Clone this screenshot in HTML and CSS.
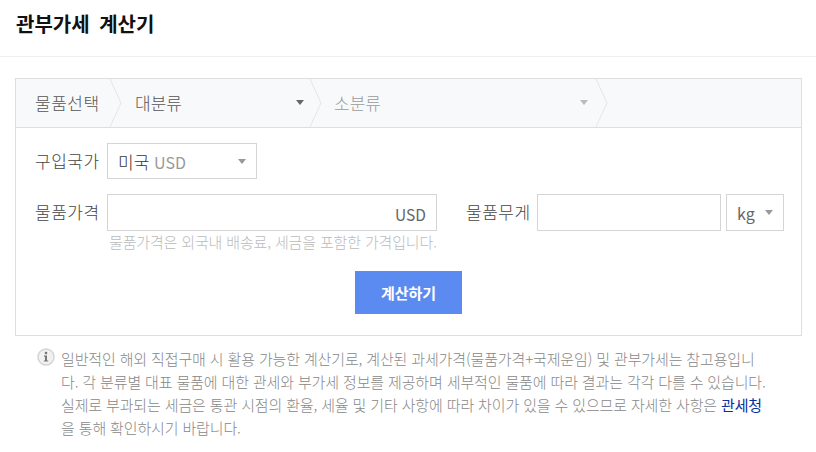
FILE: index.html
```html
<!DOCTYPE html>
<html lang="ko">
<head>
    <meta charset="UTF-8">
    <meta name="viewport" content="width=device-width, initial-scale=1.0">
    <title>관부가세 계산기</title>
    <link rel="stylesheet" href="styles.css">
</head>
<body>
    <header class="page-head">
        <h1>관부가세 계산기</h1>
    </header>
    <main class="content">
        <section class="calc-box">
            <div class="steps">
                <div class="step step-label">
                    물품선택
                    <svg class="chevron" width="13" height="48" viewBox="0 0 13 48"><path d="M1 0 L12 24 L1 48" fill="none" stroke="#e3e5e9"/></svg>
                </div>
                <div class="step step-main">
                    대분류
                    <span class="arrow"></span>
                    <svg class="chevron" width="13" height="48" viewBox="0 0 13 48"><path d="M1 0 L12 24 L1 48" fill="none" stroke="#e3e5e9"/></svg>
                </div>
                <div class="step step-sub">
                    소분류
                    <span class="arrow arrow-light"></span>
                    <svg class="chevron" width="13" height="48" viewBox="0 0 13 48"><path d="M1 0 L12 24 L1 48" fill="none" stroke="#e3e5e9"/></svg>
                </div>
            </div>
            <div class="form-body">
                <div class="row row-country">
                    <span class="label">구입국가</span>
                    <div class="field select-country">
                        <span>미국 <em>USD</em></span>
                        <span class="arrow arrow-mid"></span>
                    </div>
                </div>
                <div class="row row-price">
                    <div class="price-col">
                        <div class="price-line">
                            <span class="label">물품가격</span>
                            <div class="field input-price">USD</div>
                        </div>
                        <p class="hint">물품가격은 외국내 배송료, 세금을 포함한 가격입니다.</p>
                    </div>
                    <div class="weight-line">
                        <span class="label">물품무게</span>
                        <div class="field input-weight"></div>
                        <div class="field select-unit">
                            <span>kg</span>
                            <span class="arrow arrow-mid"></span>
                        </div>
                    </div>
                </div>
                <div class="actions">
                    <button type="button" class="btn-calc">계산하기</button>
                </div>
            </div>
        </section>
        <div class="notice">
            <svg class="notice-icon" width="18" height="18" viewBox="0 0 18 18">
                <circle cx="9" cy="9" r="8" fill="#f1f1f1" stroke="#d4d4d4" stroke-width="1.5"/>
                <circle cx="9" cy="5" r="1.3" fill="#777"/>
                <path d="M7 7.6 H10 V12.4 H11.2 V13.6 H6.8 V12.4 H8 V8.8 H7 Z" fill="#777"/>
            </svg>
            <p>일반적인 해외 직접구매 시 활용 가능한 계산기로, 계산된 과세가격(물품가격+국제운임) 및 관부가세는 참고용입니<br>다. 각 분류별 대표 물품에 대한 관세와 부가세 정보를 제공하며 세부적인 물품에 따라 결과는 각각 다를 수 있습니다.<br>실제로 부과되는 세금은 통관 시점의 환율, 세율 및 기타 사항에 따라 차이가 있을 수 있으므로 자세한 사항은 <a href="#">관세청</a><br>을 통해 확인하시기 바랍니다.</p>
        </div>
    </main>
</body>
</html>
```

FILE: styles.css
```css
* {
    box-sizing: border-box;
}
body {
    margin: 0;
    background-color: #fff;
    font-family: "Noto Sans CJK KR", "Noto Sans", sans-serif;
    font-size: 17px;
    color: #444;
    overflow: hidden;
}
.page-head {
    height: 57px;
    padding: 0 16px;
    display: flex;
    align-items: center;
    border-bottom: 1px solid #eee;
}
.page-head h1 {
    margin: 0 0 10px;
    font-size: 20px;
    font-weight: 700;
    word-spacing: 4px;
    color: #111;
}
.content {
    padding: 21px 14px 0 15px;
}
.calc-box {
    height: 258px;
    border: 1px solid #dcdee2;
}
.steps {
    display: flex;
    height: 49px;
    background-color: #f8f9fb;
    border-bottom: 1px solid #dcdee2;
}
.step {
    position: relative;
    display: flex;
    align-items: center;
    height: 48px;
    padding-bottom: 2px;
    font-weight: 300;
}
.step-label {
    width: 94px;
    padding-left: 19px;
    color: #555;
    letter-spacing: 0.5px;
}
.step-main {
    width: 200px;
    padding-left: 25px;
    color: #555;
}
.step-sub {
    width: 286px;
    padding-left: 24px;
    color: #999;
}
.chevron {
    position: absolute;
    top: 0;
    right: -12px;
}
.arrow {
    position: absolute;
    right: 6px;
    top: 21px;
    width: 0;
    height: 0;
    border-left: 4.5px solid transparent;
    border-right: 4.5px solid transparent;
    border-top: 5.5px solid #666;
}
.step-sub .arrow {
    right: 8px;
}
.arrow-light {
    border-top-color: #bbb;
}
.arrow-mid {
    position: static;
    border-top-color: #999;
}
.form-body {
    padding: 15px 17px 0 19px;
}
.row {
    display: flex;
}
.label {
    width: 72px;
    flex-shrink: 0;
    padding-bottom: 2px;
    color: #444;
    font-weight: 300;
    letter-spacing: 0.5px;
}
.row-country {
    align-items: center;
    height: 36px;
}
.field {
    display: flex;
    align-items: center;
    border: 1px solid #d5d5d5;
    background-color: #fff;
}
.select-country {
    width: 150px;
    height: 36px;
    padding: 0 10px;
    justify-content: space-between;
    color: #333;
    font-weight: 300;
}
.select-country em {
    font-style: normal;
    font-size: 16px;
    font-weight: 400;
    color: #999;
}
.row-price {
    margin-top: 15px;
    justify-content: space-between;
}
.price-col {
    width: 402px;
}
.price-line,
.weight-line {
    display: flex;
    align-items: center;
    height: 37px;
}
.input-price {
    width: 330px;
    height: 37px;
    padding: 2px 10px 0 0;
    justify-content: flex-end;
    font-size: 15.5px;
    color: #666;
}
.hint {
    margin: 1px 0 0 74px;
    font-size: 15px;
    font-weight: 300;
    line-height: 20px;
    letter-spacing: -0.15px;
    color: #bbb;
    white-space: nowrap;
}
.weight-line .label {
    width: 71px;
}
.input-weight {
    width: 184px;
    height: 37px;
}
.select-unit {
    width: 58px;
    height: 37px;
    margin-left: 5px;
    padding: 0 10px;
    justify-content: space-between;
    font-size: 16px;
    color: #666;
}
.actions {
    display: flex;
    justify-content: center;
    margin-top: 19px;
    padding-right: 2px;
}
.btn-calc {
    width: 107px;
    height: 43px;
    border: none;
    background-color: #5b8bf0;
    color: #fff;
    font-family: inherit;
    font-size: 15px;
    font-weight: 700;
}
.notice {
    display: flex;
    margin-top: 11px;
    padding-left: 22px;
}
.notice-icon {
    flex-shrink: 0;
    margin-top: 1px;
}
.notice p {
    margin: 0 0 0 6px;
    font-size: 15px;
    font-weight: 300;
    line-height: 23px;
    letter-spacing: -0.14px;
    color: #888;
    white-space: nowrap;
}
.notice a {
    font-weight: 400;
    color: #0a2f9c;
    text-decoration: none;
}
```
